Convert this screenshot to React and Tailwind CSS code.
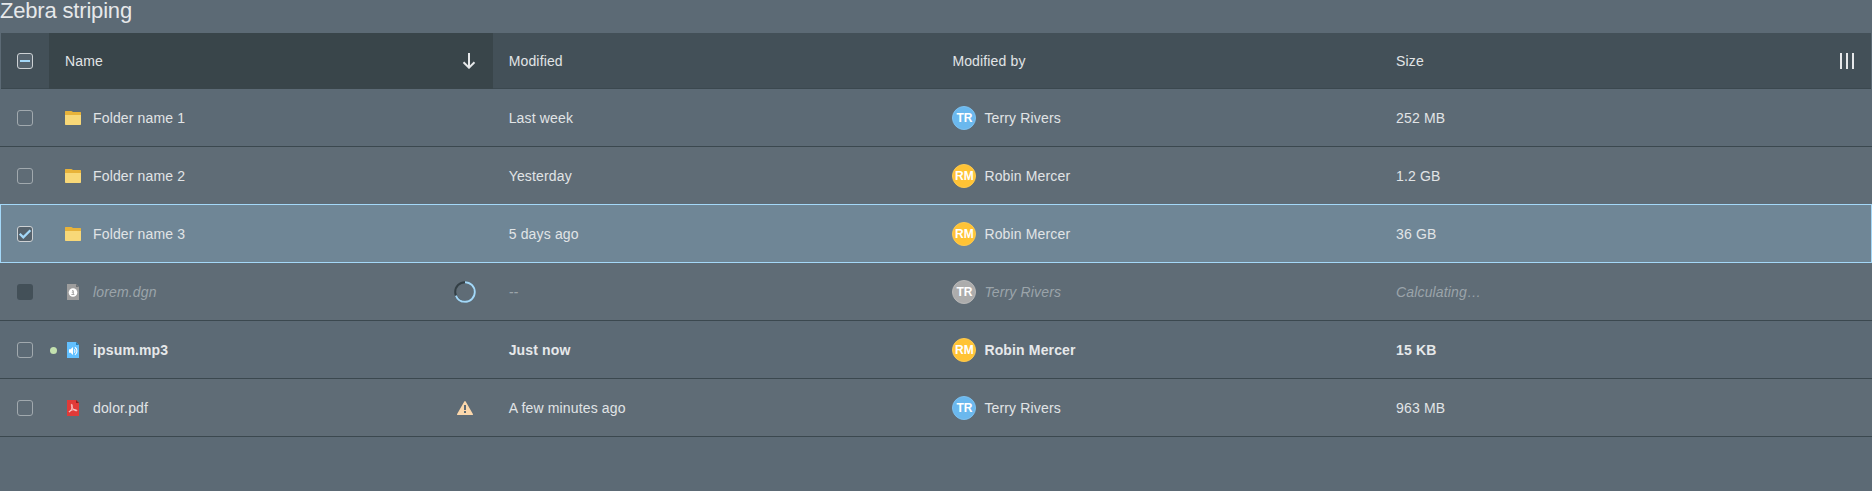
const Folder = () => (
  <svg width="16" height="16" viewBox="0 0 16 16" className="shrink-0">
    <path d="M.5 1h5.7a1 1 0 0 1 .7.3L8 2h7.5a.5.5 0 0 1 .5.5V6H0V1.5A.5.5 0 0 1 .5 1z" fill="#e8b33a" />
    <path d="M0 5h16v9.3a.7.7 0 0 1-.7.7H.7a.7.7 0 0 1-.7-.7z" fill="#f8d878" />
  </svg>
);

const Page = ({ body, fold, children }) => (
  <svg width="16" height="16" viewBox="0 0 16 16" className="shrink-0">
    <path d="M2 0h9l3 3v13H2z" fill={body} />
    <path d="M11 0l3 3h-3z" fill={fold} />
    {children}
  </svg>
);

const Dgn = () => (
  <Page body="#9d9d9d" fold="#6e7275">
    <circle cx="8" cy="8.5" r="4.3" fill="#fff" />
    <path d="M7 6.7h1.3v3.6M6.8 8.2h1.5M6.400 10.5h3" fill="none" stroke="#9d9d9d" strokeWidth=".9" />
  </Page>
);

const Audio = () => (
  <Page body="#62c0ff" fold="#2b7fb5">
    <path d="M4 7.200h1.600L8 5v8l-2.400-2.200H4z" fill="#fff" />
    <path d="M9.200 7.300a2.300 2.300 0 0 1 0 3.400M9.900 5.200a4.500 4.500 0 0 1 0 7.600" fill="none" stroke="#fff" strokeWidth="1.100" />
  </Page>
);

const Pdf = () => (
  <Page body="#e03a38" fold="#8c1f1f">
    <path
      d="M6.600 4.300c1.100 0 .7 3-.2 5-.9 1.900-1.900 3.200-2.300 2.700-.5-.7 2-2.200 5-2.300 1.900-.1 3.200.4 2.700 1-.6.7-3-.7-4.400-2.700-.9-1.500-1.400-3.700-.8-3.700z"
      fill="none"
      stroke="#fbdada"
      strokeWidth=".9"
    />
  </Page>
);

const Spinner = () => (
  <svg width="24" height="24" viewBox="0 0 24 24">
    <circle cx="12" cy="12" r="9.8" fill="none" stroke="#333f45" strokeWidth="2" />
    <circle
      cx="12"
      cy="12"
      r="9.8"
      fill="none"
      stroke="#a4d8f8"
      strokeWidth="2"
      pathLength="100"
      strokeDasharray="69 31"
      transform="rotate(-90 12 12)"
    />
  </svg>
);

const Warning = () => (
  <svg width="16" height="16" viewBox="0 0 16 16" className="mr-1">
    <path
      fillRule="evenodd"
      d="M8.700 1.400l7.200 12.700a.6.6 0 0 1-.6.9H.7a.6.6 0 0 1-.6-.9L7.300 1.400a.8.8 0 0 1 1.400 0zM7 5v5h2V5zM7 11v2h2v-2z"
      fill="#fbd7ab"
    />
  </svg>
);

const boxStyles = {
  off: "border border-[#a1a9ae]",
  on: "border border-[#cdd1d4] bg-[#56636d]",
  mixed: "border border-[#cdd1d4] bg-[#56636d]",
  disabled: "bg-[#435058]",
};

const Checkbox = ({ state }) => (
  <span className={`flex size-4 items-center justify-center rounded-[3px] ${boxStyles[state]}`}>
    {state === "mixed" && <span className="h-0.5 w-2.5 bg-[#a4d8f8]" />}
    {state === "on" && (
      <svg width="14" height="14" viewBox="0 0 14 14">
        <path d="M1.700 6.800l3.600 3.600 7.100-7.200" fill="none" stroke="#a4d8f8" strokeWidth="2.300" />
      </svg>
    )}
  </span>
);

const people = {
  TR: ["Terry Rivers", "bg-[#6ab8ee] border-[#7dc0ee]"],
  RM: ["Robin Mercer", "bg-[#ffc335] border-[#fdc94e]"],
};

const rows = [
  { name: "Folder name 1", icon: Folder, modified: "Last week", by: "TR", size: "252 MB" },
  { name: "Folder name 2", icon: Folder, modified: "Yesterday", by: "RM", size: "1.2 GB", beforeSelected: true },
  { name: "Folder name 3", icon: Folder, modified: "5 days ago", by: "RM", size: "36 GB", selected: true },
  { name: "lorem.dgn", icon: Dgn, modified: "--", by: "TR", size: "Calculating…", disabled: true, status: Spinner },
  { name: "ipsum.mp3", icon: Audio, modified: "Just now", by: "RM", size: "15 KB", unread: true },
  { name: "dolor.pdf", icon: Pdf, modified: "A few minutes ago", by: "TR", size: "963 MB", status: Warning },
];

const columns = "grid grid-cols-[48px_repeat(3,443.7px)_minmax(0,1fr)_47px] px-px";

function Row({ row, index }) {
  const Icon = row.icon;
  const Status = row.status;
  const bg = row.selected ? "bg-[#6f8696]" : index % 2 ? "bg-[#5f6c76]" : "bg-[#5c6a75]";
  const line = row.selected
    ? "shadow-[inset_1px_0_#a4d8f8,inset_-1px_0_#a4d8f8,inset_0_-1px_#a4d8f8]"
    : row.beforeSelected
      ? "shadow-[inset_0_-1px_#a4d8f8]"
      : "shadow-[inset_0_-1px_#3b484f]";
  const text = row.disabled ? "italic text-[#9ba4aa]" : row.unread ? "font-bold text-[#e6e8ea]" : "text-[#e1e4e6]";
  const [person, tone] = people[row.by];
  return (
    <div className={`${columns} h-[58px] ${bg} ${line} ${text}`}>
      <div className="flex items-center pl-4">
        <Checkbox state={row.selected ? "on" : row.disabled ? "disabled" : "off"} />
      </div>
      <div className="flex items-center pr-4">
        <span className="flex w-4 shrink-0">
          {row.unread && <span className="ml-[0.5px] mt-px size-[7px] rounded-full bg-[#c3e1af]" />}
        </span>
        <Icon />
        <span className="ml-3 grow">{row.name}</span>
        {Status && <Status />}
      </div>
      <div className="flex items-center px-4">{row.modified}</div>
      <div className="flex items-center gap-2 px-4">
        <span
          className={`flex size-6 items-center justify-center rounded-full border pb-px text-[12px] font-bold not-italic tracking-normal text-white ${row.disabled ? "border-[#b8b8b8] bg-[#acacac]" : tone}`}
        >
          {row.by}
        </span>
        {person}
      </div>
      <div className="flex items-center px-4">{row.size}</div>
      <div />
    </div>
  );
}

export default function App() {
  return (
    <main className="h-[491px] bg-[#5c6a75] font-['Liberation_Sans',Arial,sans-serif] text-[14px] tracking-[0.15px] text-[#e1e4e6]">
      <h1 className="h-[33px] text-[22px] leading-[22px] tracking-[-0.18px] text-[#e6e8ea]">Zebra striping</h1>
      <div className={`${columns} h-14`}>
        <div className="flex items-center bg-[#435058] pl-4 shadow-[inset_0_-1px_#3b484f]">
          <Checkbox state="mixed" />
        </div>
        <div className="flex items-center justify-between bg-[#39454a] px-4">
          Name
          <svg width="16" height="16" viewBox="0 0 16 16">
            <path d="M8 0v15M2.500 9.300L8 14.700l5.500-5.400" fill="none" stroke="#e6e8ea" strokeWidth="2" />
          </svg>
        </div>
        <div className="flex items-center bg-[#435058] px-4 shadow-[inset_0_-1px_#3b484f]">Modified</div>
        <div className="flex items-center bg-[#435058] px-4 shadow-[inset_0_-1px_#3b484f]">Modified by</div>
        <div className="flex items-center bg-[#435058] px-4 shadow-[inset_0_-1px_#3b484f]">Size</div>
        <div className="flex items-center gap-1 bg-[#435058] pl-4 shadow-[inset_0_-1px_#3b484f]">
          <span className="h-4 w-0.5 bg-[#e6e8ea]" />
          <span className="h-4 w-0.5 bg-[#e6e8ea]" />
          <span className="h-4 w-0.5 bg-[#e6e8ea]" />
        </div>
      </div>
      {rows.map((row, i) => (
        <Row key={row.name} row={row} index={i} />
      ))}
    </main>
  );
}
